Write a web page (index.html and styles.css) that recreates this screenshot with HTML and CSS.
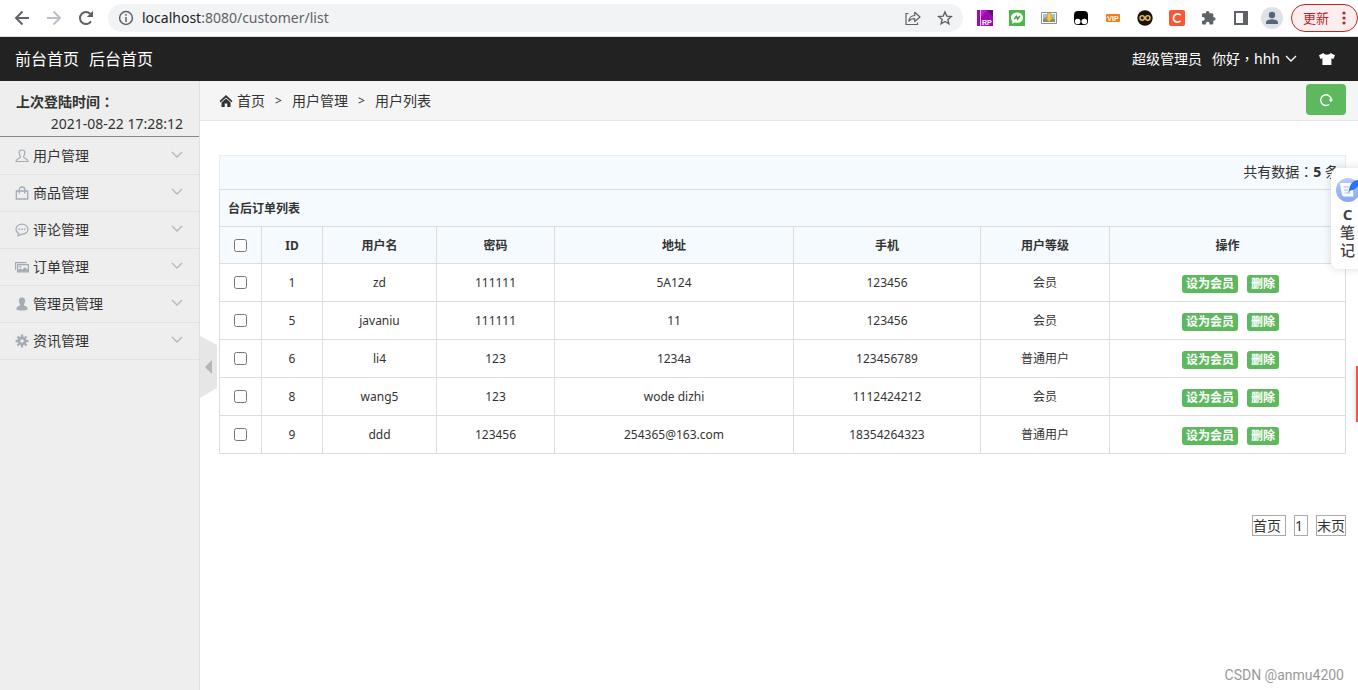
FILE: index.html
```html
<!DOCTYPE html>
<html lang="zh-CN">
<head>
<meta charset="utf-8">
<meta name="viewport" content="width=device-width, initial-scale=1">
<title>用户列表</title>
<link rel="stylesheet" href="styles.css">
</head>
<body>
<div class="browser-bar">
  <div class="nav-buttons">
    <button class="icon-button" aria-label="后退"><svg width="16" height="16" viewBox="0 0 16 16" fill="none" stroke="#5f6368" stroke-width="2"><path d="M15 8H2.500M8.500 1.500L2 8l6.500 6.500"/></svg></button>
    <button class="icon-button" aria-label="前进"><svg width="16" height="16" viewBox="0 0 16 16" fill="none" stroke="#bdc1c6" stroke-width="2"><path d="M1 8h12.500M7.500 1.500L14 8l-6.500 6.500"/></svg></button>
    <button class="icon-button" aria-label="刷新"><svg width="16" height="16" viewBox="0 0 16 16"><path d="M13 11.400A6 6 0 1 1 12.400 4" fill="none" stroke="#5f6368" stroke-width="2"/><path d="M15 .8V7H8.800z" fill="#5f6368"/></svg></button>
  </div>
  <div class="address">
    <svg width="16" height="16" viewBox="0 0 16 16" fill="none" stroke="#5f6368" stroke-width="1.500"><circle cx="8" cy="8" r="6.400"/><path d="M8 7v5M8 4v1.700"/></svg>
    <span class="url"><b>localhost</b>:8080/customer/list</span>
    <button class="icon-button" aria-label="分享"><svg width="16" height="16" viewBox="0 0 16 16" fill="none" stroke="#5f6368" stroke-width="1.200"><path d="M3.500 3.500H1v11h11.500v-2"/><path d="M3.800 11C4.300 7.500 6 5.700 9.700 5.500V2.300L15 7l-5.300 4.500V8.600C7.200 8.500 5.300 9.300 3.800 11z" stroke-linejoin="round"/></svg></button>
    <button class="icon-button" aria-label="收藏"><svg width="16" height="16" viewBox="0 0 16 16" fill="none" stroke="#5f6368" stroke-width="1.400"><path d="M8 2l1.800 4.100 4.500.4-3.400 3 1 4.300L8 11.500l-3.900 2.300 1-4.300-3.400-3 4.500-.4z"/></svg></button>
  </div>
  <div class="extensions">
    <svg width="16" height="16" viewBox="0 0 16 16"><path fill="#9a0bb0" d="M0 0h16v16H0z"/><path fill="#c41bd8" d="M4 0h6L4 7zM4 9l5 7H4z"/><path fill="#5b0f86" d="M10 0h6v7z"/><path fill="#f4b4fa" d="M3 0h1v16H3z"/><text class="rp-label" x="5" y="14.500">RP</text></svg>
    <svg width="16" height="16" viewBox="0 0 16 16"><path fill="#4db748" d="M0 0h16v16H0z"/><path fill="#fff" d="M8 2.500c3.500 0 6 2.200 6 5.200s-2.500 5.100-6 5.100c-.8 0-1.600-.1-2.300-.3L3 13.700l.6-2.400C2.600 10.400 2 9.100 2 7.700c0-3 2.500-5.200 6-5.200z"/><path d="M5.300 9.300L7.300 6.200l1.300 2.900L10.700 6" fill="none" stroke="#3fa63b" stroke-width="1.500"/></svg>
    <svg width="16" height="16" viewBox="0 0 16 16"><path fill="#fff" stroke="#8c9398" d="M.5 2.500h15v11H.5z"/><path fill="#9cc4df" d="M2 4h12v8H2z"/><path fill="#7f9178" d="M2 9l4-2 8 2v3H2z"/><path fill="#fcc62b" stroke="#c98d12" stroke-width=".5" d="M6.500 3h3.500v4.500h2L8.200 12 4.500 7.500h2z"/></svg>
    <svg width="16" height="16" viewBox="0 0 16 16"><rect x="1" y="1" width="14" height="14" rx="4"/><circle cx="4.700" cy="11.500" r="2.800" fill="#fff"/><circle cx="11.300" cy="11.500" r="2.800" fill="#fff"/></svg>
    <svg width="16" height="16" viewBox="0 0 16 16"><rect x="1" y="4" width="14" height="8" rx="1" fill="#f67a20"/><text class="vip-label" x="8" y="10.500">VIP</text></svg>
    <svg width="16" height="16" viewBox="0 0 16 16"><circle cx="8" cy="8" r="7.700" fill="#17130d"/><g fill="none" stroke="#e8b45a" stroke-width="1.500"><circle cx="5.200" cy="8" r="2.200"/><circle cx="10.800" cy="8" r="2.200"/></g></svg>
    <svg width="16" height="16" viewBox="0 0 16 16"><rect width="16" height="16" rx="2" fill="#fc5531"/><path d="M11.800 5.200C9.700 3 4.500 3.700 4.500 8.200c0 4.400 5 4.700 7.200 2.700" fill="none" stroke="#fff" stroke-width="1.700"/></svg>
    <svg width="16" height="16" viewBox="0 0 16 16" fill="#5f6368"><path d="M13.300 7.300h-1V4.600c0-.7-.6-1.300-1.300-1.300H8.300v-1a1.700 1.700 0 0 0-3.300 0v1H2.300C1.600 3.300 1 3.900 1 4.600v2.500h1a1.800 1.800 0 0 1 0 3.600H1v2.600c0 .7.600 1.300 1.300 1.300h2.600v-1a1.800 1.800 0 0 1 3.600 0v1H11c.7 0 1.300-.6 1.300-1.300v-2.700h1a1.700 1.700 0 0 0 0-3.300z"/></svg>
    <svg width="16" height="16" viewBox="0 0 16 16"><path fill="#5f6368" fill-rule="evenodd" d="M1 1h14v14H1zM3 3v10h7V3z"/></svg>
  </div>
  <button class="icon-button" aria-label="用户"><svg width="22" height="22" viewBox="0 0 22 22"><circle cx="11" cy="11" r="11" fill="#dee1e6"/><circle cx="11" cy="8" r="3.200" fill="#56657b"/><path fill="#56657b" d="M5 17v-1.500c0-2.200 3.500-3.200 6-3.200s6 1 6 3.200V17z"/></svg></button>
  <button class="update">更新<svg width="4" height="14" viewBox="0 0 4 14" fill="#c5221f"><circle cx="2" cy="2" r="1.600"/><circle cx="2" cy="7" r="1.600"/><circle cx="2" cy="12" r="1.600"/></svg></button>
</div>

<header class="topbar">
  <nav class="topbar-links"><a href="#">前台首页</a><a href="#">后台首页</a></nav>
  <div class="account">
    <span>超级管理员</span>
    <button class="greeting"><span>你好<span class="wide-punct" lang="zh-TW">，</span>hhh</span><svg width="12" height="8" viewBox="0 0 12 8" fill="none" stroke="#fff" stroke-width="1.400"><path d="M1 1l5 5 5-5"/></svg></button>
    <button class="icon-button" aria-label="换肤"><svg width="18" height="14" viewBox="0 0 18 14" fill="#fff"><path d="M5.500 1L1 3.200 2.400 7l2-.7V13h9V6.300l2 .7L17 3.200 12.500 1c-.7 2.200-6.300 2.200-7 0z"/></svg></button>
  </div>
</header>

<div class="body">
  <aside class="sidebar">
    <div class="last-login"><strong>上次登陆时间<span class="wide-punct" lang="zh-TW">：</span></strong><time>2021-08-22 17:28:12</time></div>
    <nav class="menu">
      <a href="#"><svg class="menu-icon" viewBox="0 0 14 14" fill="none" stroke="#a3abb7" stroke-width="1.200"><path d="M7 1C4.800 1 4 2.500 4.200 4.300 4.400 6 5.200 6.800 5.400 8 5.400 9.300 1 9.500 1 12.500h12C13 9.500 8.600 9.300 8.600 8c.2-1.200 1-2 1.200-3.700C10 2.500 9.200 1 7 1z"/></svg>用户管理<svg class="chevron" viewBox="0 0 12 8"><path d="M1 1l5 5 5-5"/></svg></a>
      <a href="#"><svg class="menu-icon" viewBox="0 0 14 14" fill="none" stroke="#a3abb7" stroke-width="1.300"><path d="M1.300 5h11.400v8H1.300zM4.300 7.500V3.200a2.700 2.200 0 0 1 5.400 0v4.300"/></svg>商品管理<svg class="chevron" viewBox="0 0 12 8"><path d="M1 1l5 5 5-5"/></svg></a>
      <a href="#"><svg class="menu-icon" viewBox="0 0 14 14" fill="none" stroke="#a3abb7" stroke-width="1.200"><path d="M7 1.200c3.400 0 6 2.200 6 5s-2.600 5-6 5l-4 1.600.8-2.300C2 9.600 1 8 1 6.200c0-2.800 2.600-5 6-5z"/><path d="M3.500 6.300h1.600M6.200 6.300h1.600M8.900 6.300h1.600" stroke-width="1.600"/></svg>评论管理<svg class="chevron" viewBox="0 0 12 8"><path d="M1 1l5 5 5-5"/></svg></a>
      <a href="#"><svg class="menu-icon" viewBox="0 0 14 14"><path d="M.6 10V2.600h11" fill="none" stroke="#a3abb7" stroke-width="1.200"/><path fill="#a3abb7" fill-rule="evenodd" d="M2 4h12v8.500H2zM3.200 5.200v6h9.600v-6z"/><circle cx="5.300" cy="6.800" r="1" fill="#a3abb7"/><path fill="#a3abb7" d="M3 11.500V10l2.500-1.500 1.700 1.300L10 7.200l3 2.800v1.500z"/></svg>订单管理<svg class="chevron" viewBox="0 0 12 8"><path d="M1 1l5 5 5-5"/></svg></a>
      <a href="#"><svg class="menu-icon" viewBox="0 0 14 14" fill="#a3abb7"><path d="M7 .5C4.700.5 3.700 2 3.900 4.300 4 6 5 6.800 5.200 8 5 9 1.500 9.200 1.500 11.500v1c2 1.300 9 1.300 11 0v-1C12.500 9.200 9 9 8.800 8 9 6.800 10 6 10.100 4.300 10.300 2 9.300.5 7 .5z"/></svg>管理员管理<svg class="chevron" viewBox="0 0 12 8"><path d="M1 1l5 5 5-5"/></svg></a>
      <a href="#"><svg class="menu-icon" viewBox="0 0 14 14" fill="none" stroke="#a3abb7"><circle cx="7" cy="7" r="3.100" stroke-width="2.600"/><path d="M7 .6V3M7 11v2.400M.6 7H3M11 7h2.400M2.500 2.500l1.700 1.700M9.800 9.800l1.700 1.700M11.500 2.500L9.800 4.200M4.200 9.800l-1.700 1.700" stroke-width="2.300"/></svg>资讯管理<svg class="chevron" viewBox="0 0 12 8"><path d="M1 1l5 5 5-5"/></svg></a>
    </nav>
  </aside>

  <main class="main">
    <button class="collapse" aria-label="收起菜单"><svg width="17" height="62" viewBox="0 0 17 62"><path fill="#e6e6e6" d="M0 0l17 9v43L0 62z"/><path fill="#b5b5b5" d="M12 24v14l-7-7z"/></svg></button>
    <div class="crumbs">
      <nav class="crumb-trail">
        <svg width="14" height="12" viewBox="0 0 14 12" fill="#333"><path d="M7 0l6.500 6-1.100 1.200L7 2.400 1.600 7.200.5 6z"/><path d="M7 3.500l4.500 4V12H8.300V8.500H5.700V12H2.500V7.500z"/></svg>
        <a href="#">首页</a><span class="sep">&gt;</span><span>用户管理</span><span class="sep">&gt;</span><span>用户列表</span>
      </nav>
      <button class="refresh" aria-label="刷新列表"><svg width="14" height="14" viewBox="0 0 14 14"><path d="M10 11.500A5.300 5.300 0 1 1 12.300 7" fill="none" stroke="#fff" stroke-width="1.400"/><path fill="#fff" d="M9.600 6.500H14L12 9.300z"/></svg></button>
    </div>
    <div class="content">
      <div class="summary">共有数据<span class="wide-punct" lang="zh-TW">：</span><strong>5</strong> 条</div>
      <table class="users">
        <colgroup><col class="c-check"><col class="c-id"><col class="c-name"><col class="c-pass"><col class="c-addr"><col class="c-phone"><col class="c-level"><col class="c-ops"></colgroup>
        <thead>
          <tr><th class="table-title" colspan="8">台后订单列表</th></tr>
          <tr><th><input type="checkbox" aria-label="全选"></th><th>ID</th><th>用户名</th><th>密码</th><th>地址</th><th>手机</th><th>用户等级</th><th>操作</th></tr>
        </thead>
        <tbody>
          <tr><td><input type="checkbox" aria-label="选择 1"></td><td>1</td><td>zd</td><td>111111</td><td>5A124</td><td>123456</td><td>会员</td><td><div class="ops"><button>设为会员</button><button>删除</button></div></td></tr>
          <tr><td><input type="checkbox" aria-label="选择 5"></td><td>5</td><td>javaniu</td><td>111111</td><td>11</td><td>123456</td><td>会员</td><td><div class="ops"><button>设为会员</button><button>删除</button></div></td></tr>
          <tr><td><input type="checkbox" aria-label="选择 6"></td><td>6</td><td>li4</td><td>123</td><td>1234a</td><td>123456789</td><td>普通用户</td><td><div class="ops"><button>设为会员</button><button>删除</button></div></td></tr>
          <tr><td><input type="checkbox" aria-label="选择 8"></td><td>8</td><td>wang5</td><td>123</td><td>wode dizhi</td><td>1112424212</td><td>会员</td><td><div class="ops"><button>设为会员</button><button>删除</button></div></td></tr>
          <tr><td><input type="checkbox" aria-label="选择 9"></td><td>9</td><td>ddd</td><td>123456</td><td>254365@163.com</td><td>18354264323</td><td>普通用户</td><td><div class="ops"><button>设为会员</button><button>删除</button></div></td></tr>
        </tbody>
      </table>
      <nav class="pager"><a class="spaced" href="#">首页</a><a class="spaced" href="#">1</a><a href="#">末页</a></nav>
    </div>
  </main>
</div>

<button class="notes">
  <svg width="24" height="24" viewBox="0 0 24 24"><defs><linearGradient id="disc" x1="0" y1="0" x2="0" y2="1"><stop offset="0" stop-color="#b9cdf8"/><stop offset="1" stop-color="#84a6f3"/></linearGradient></defs><circle cx="12" cy="12" r="12" fill="url(#disc)"/><path fill="#fff" d="M4 5h12l1.500 13.500H8c-1.500 0-2-1-2.200-2.500z"/><path d="M7.500 9h5M8 12h4M8.500 15h6" stroke="#9db8f5" stroke-width="1.200"/><path fill="#2677f5" d="M24 2c-6-.5-10 3-11 10l-1 3 2.500-2.500C20 12 23 8 24 2z"/></svg>
  <b>C</b><span>笔</span><span>记</span>
</button>
<div class="edge-tab"></div>
<div class="watermark">CSDN @anmu4200</div>
</body>
</html>
```
FILE: styles.css
```css
* {
  box-sizing: border-box;
}

body {
  display: flex;
  flex-direction: column;
  min-height: 100vh;
  margin: 0;
  position: relative;
  overflow-x: hidden;
  background: #fff;
  color: #333;
  font: 14px/22px "Noto Sans", "Noto Sans CJK SC", sans-serif;
}

a {
  color: inherit;
  text-decoration: none;
}

button {
  padding: 0;
  border: 0;
  background: none;
  color: inherit;
  font: inherit;
}

svg {
  display: block;
  flex: none;
}

.wide-punct {
  font-family: "Noto Sans CJK TC", sans-serif;
  line-height: 1;
}

/* Browser toolbar */
.browser-bar {
  display: flex;
  align-items: center;
  height: 37px;
  padding-left: 14px;
  border-bottom: 1px solid #dadce0;
}

.nav-buttons {
  display: flex;
  gap: 16px;
  margin-right: 14px;
}

.address {
  display: flex;
  flex: 1;
  align-items: center;
  gap: 16px;
  height: 28px;
  padding: 0 10px;
  border-radius: 14px;
  background: #f1f3f4;
}

.url {
  flex: 1;
  margin-left: -8px;
  color: #5f6368;
  font-size: 14px;
}

.url b {
  color: #202124;
  font-weight: normal;
}

.extensions {
  display: flex;
  gap: 16px;
  margin: 0 12px 0 14px;
}

.rp-label {
  fill: #fff;
  font: bold 7px "Liberation Sans", sans-serif;
}

.vip-label {
  fill: #fff;
  font: bold 7px "Liberation Sans", sans-serif;
  text-anchor: middle;
}

.update {
  display: flex;
  align-items: center;
  gap: 13px;
  height: 28px;
  margin-left: 8px;
  padding: 0 11px;
  border: 1px solid #c5221f;
  border-radius: 14px;
  background: #fceeee;
  color: #c5221f;
  font-size: 13px;
}

/* Site header */
.topbar {
  display: flex;
  align-items: center;
  justify-content: space-between;
  height: 44px;
  padding: 0 22px 0 15px;
  background: #222;
  color: #fff;
}

.topbar-links,
.account,
.greeting {
  display: flex;
  align-items: center;
}

.topbar-links {
  gap: 10px;
  font-size: 16px;
}

.account {
  gap: 10px;
}

.greeting svg {
  margin: 0 11px 0 5px;
}

/* Layout */
.body {
  display: flex;
  flex: 1;
}

.sidebar {
  width: 200px;
  border-right: 1px solid #e0e0e0;
  background: #eee;
}

.last-login {
  display: flex;
  flex-direction: column;
  padding: 10px 16px 1px;
  border-bottom: 1px solid #888;
}

.last-login time {
  align-self: flex-end;
}

.menu {
  padding-top: 1px;
}

.menu a {
  display: flex;
  align-items: center;
  height: 37px;
  padding: 0 16px 0 15px;
  border-bottom: 1px solid #e2e2e2;
}

.menu-icon {
  width: 14px;
  height: 14px;
  margin-right: 4px;
}

.chevron {
  width: 12px;
  height: 8px;
  margin-bottom: 2px;
  margin-left: auto;
  fill: none;
  stroke: #b6b6b6;
  stroke-width: 1.3;
}

.main {
  position: relative;
  flex: 1;
  min-width: 0;
}

.collapse {
  position: absolute;
  top: 255px;
  left: 0;
}

.crumbs {
  display: flex;
  align-items: center;
  justify-content: space-between;
  height: 40px;
  padding: 0 12px 2px 19px;
  border-bottom: 1px solid #e5e5e5;
  background: #f5f5f5;
}

.crumb-trail {
  display: flex;
  align-items: center;
  padding-top: 2px;
}

.crumb-trail svg {
  margin-right: 4px;
}

.sep {
  width: 27px;
  font-size: 12px;
  text-align: center;
}

.refresh {
  display: grid;
  place-items: center;
  width: 40px;
  height: 31px;
  border-radius: 4px;
  background: #5eb95e;
}

/* User list */
.content {
  padding: 34px 12px 0 19px;
}

.summary {
  padding: 4px 6px 6px;
  border: 1px solid #e8eef0;
  border-bottom: 0;
  background: #f5fafe;
  line-height: 23px;
  text-align: right;
}

.users {
  width: 100%;
  border-collapse: collapse;
  table-layout: fixed;
  font-size: 12px;
  line-height: 18px;
  text-align: center;
}

.c-check { width: 42px; }
.c-id { width: 61px; }
.c-name { width: 114px; }
.c-pass { width: 118px; }
.c-addr { width: 239px; }
.c-phone { width: 187px; }
.c-level { width: 129px; }
.c-ops { width: 236px; }

.users th,
.users td {
  height: 38px;
  padding: 1px 0 0;
  border: 1px solid #ddd;
}

.users th {
  height: 37px;
  padding-top: 2px;
  background: #f5fafe;
}

.users .table-title {
  padding: 2px 8px 0;
  text-align: left;
}

.users th:first-child,
.users td:first-child {
  padding-top: 0;
}

.users .table-title:first-child {
  padding-top: 2px;
}

.users input {
  display: block;
  width: 13px;
  height: 13px;
  margin: 0 auto;
}

.ops {
  display: flex;
  justify-content: center;
  gap: 9px;
  padding: 1px 0 0 6px;
}

.ops button {
  padding: 0 4px;
  border-radius: 3px;
  background: #5eb95e;
  color: #fff;
  font-weight: bold;
}

.pager {
  display: flex;
  justify-content: flex-end;
  gap: 8px;
  margin-top: 61px;
}

.pager a {
  border: 1px solid #aaa;
  line-height: 19px;
}

.pager .spaced {
  padding-right: 4px;
}

/* Floating items over the page */
.notes {
  position: absolute;
  top: 168px;
  right: -8px;
  display: flex;
  flex-direction: column;
  align-items: center;
  width: 35px;
  padding: 10px 2px 10px 0;
  border-radius: 8px;
  background: #fff;
  box-shadow: 0 0 8px rgba(0, 0, 0, 0.15);
  color: #444;
  font-size: 15px;
  font-weight: 500;
  line-height: 18px;
}

.notes svg {
  margin-bottom: 3px;
}

.edge-tab {
  position: absolute;
  top: 366px;
  right: 0;
  width: 2px;
  height: 56px;
  background: #f5533d;
  box-shadow: 0 2px 6px rgba(0, 0, 0, 0.3);
}

.watermark {
  position: absolute;
  right: 14px;
  bottom: 4px;
  color: #999;
  font-family: Roboto, sans-serif;
  font-size: 14px;
}
```
